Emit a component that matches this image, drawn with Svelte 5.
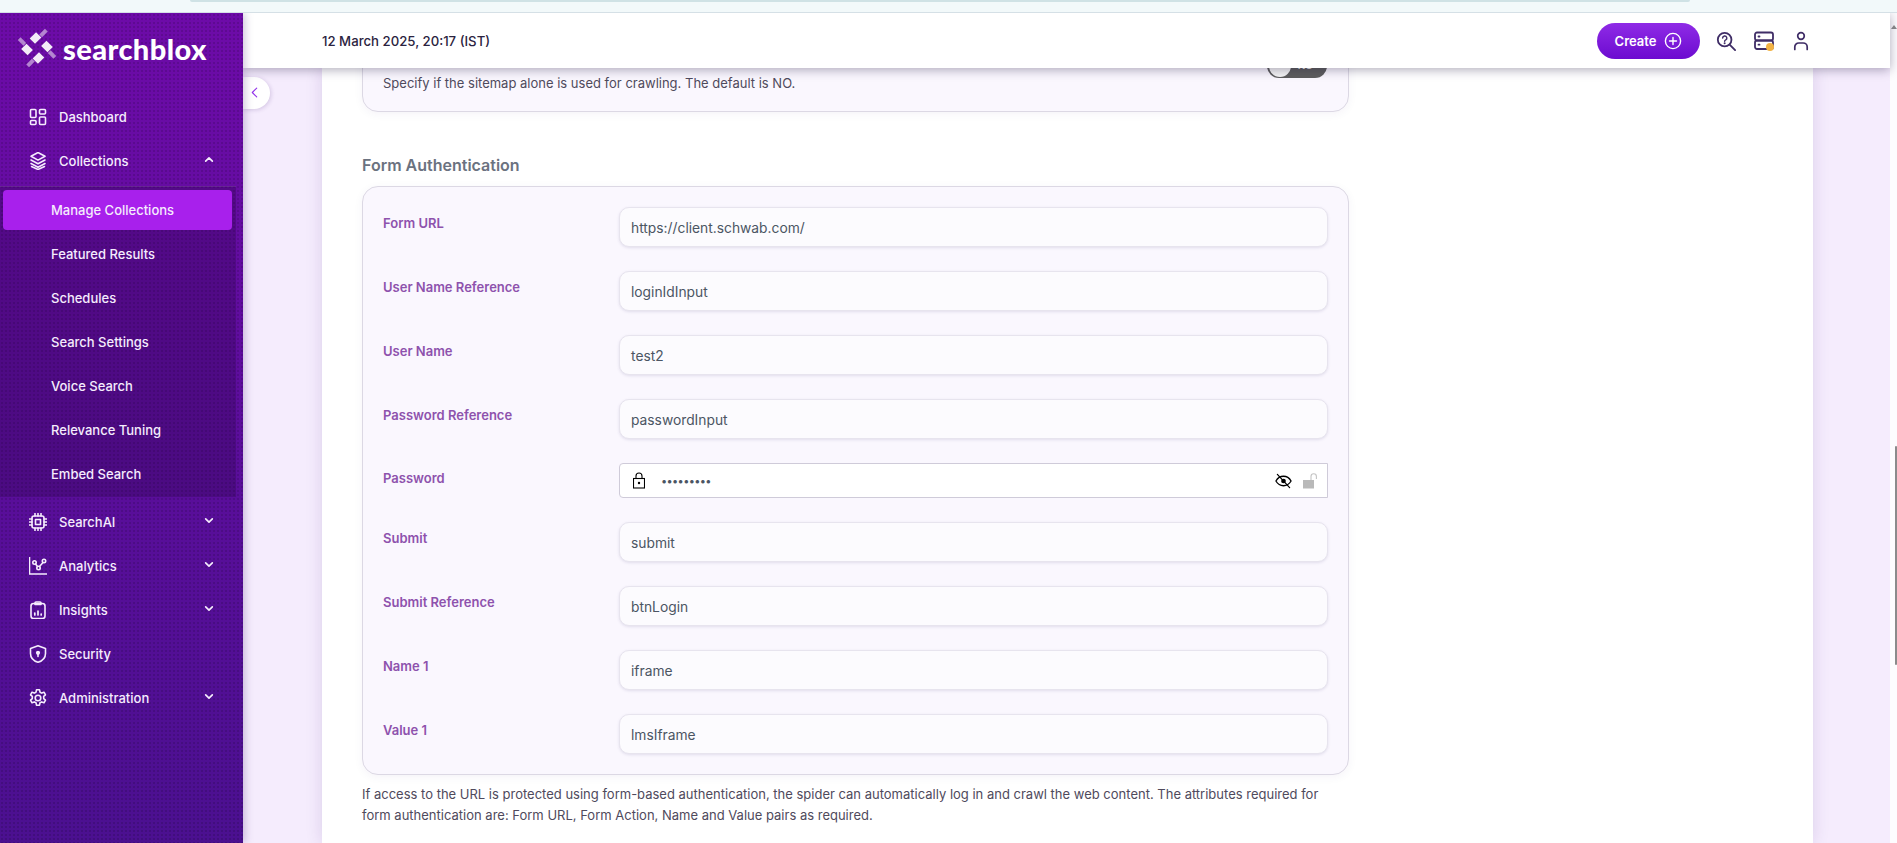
<script lang="ts">
	const fields = [
		{ label: 'Form URL', value: 'https://client.schwab.com/' },
		{ label: 'User Name Reference', value: 'loginIdInput' },
		{ label: 'User Name', value: 'test2' },
		{ label: 'Password Reference', value: 'passwordInput' },
		{ label: 'Password', value: '•••••••••', secret: true },
		{ label: 'Submit', value: 'submit' },
		{ label: 'Submit Reference', value: 'btnLogin' },
		{ label: 'Name 1', value: 'iframe' },
		{ label: 'Value 1', value: 'lmsIframe' }
	];

	const subItems = [
		'Manage Collections',
		'Featured Results',
		'Schedules',
		'Search Settings',
		'Voice Search',
		'Relevance Tuning',
		'Embed Search'
	];

	const lowerItems = [
		{ name: 'SearchAI', icon: 'chip', caret: true },
		{ name: 'Analytics', icon: 'chart', caret: true },
		{ name: 'Insights', icon: 'clip', caret: true },
		{ name: 'Security', icon: 'shield', caret: false },
		{ name: 'Administration', icon: 'gear', caret: true }
	];

	const logoTurns = [0, 90, 180, 270];
</script>

{#snippet caret(up: boolean)}
	<svg class="caret" viewBox="0 0 12 8" width="10" height="7" fill="none" stroke="currentColor" stroke-width="2" stroke-linecap="round" stroke-linejoin="round">
		<path d={up ? 'M2 6l4-4 4 4' : 'M2 2l4 4 4-4'} />
	</svg>
{/snippet}

{#snippet navIcon(name: string)}
	<svg class="nav-icon" viewBox="1 1 18 18" width="18" height="18" fill="none" stroke="currentColor" stroke-width="1.600" stroke-linecap="round" stroke-linejoin="round">
		{#if name === 'dash'}
			<rect x="2.500" y="2.500" width="5.500" height="8" rx="1" />
			<rect x="11.500" y="2.500" width="6" height="4.500" rx="1" />
			<rect x="2.500" y="13.500" width="5.500" height="4" rx="1" />
			<rect x="11.500" y="10" width="6" height="7.500" rx="1" />
		{:else if name === 'layers'}
			<path d="M10 1.500l7 3.800-7 3.800-7-3.800z" />
			<path d="M3 9l7 3.800L17 9" />
			<path d="M3 12.500l7 3.800 7-3.800" />
			<path d="M3.500 15.500l6.500 3 6.500-3" />
		{:else if name === 'chip'}
			<rect x="4" y="4" width="12" height="12" rx="2" />
			<rect x="7.500" y="7.500" width="5" height="5" />
			<path d="M7 1.500V4M10 1.500V4M13 1.500V4M7 16v2.500M10 16v2.500M13 16v2.500M1.500 7H4M1.500 10H4M1.500 13H4M16 7h2.500M16 10h2.500M16 13h2.500" />
		{:else if name === 'chart'}
			<path d="M1.500 1.500v16.500h17" stroke-linecap="square" />
			<circle cx="6.500" cy="6.500" r="1.700" />
			<circle cx="10.500" cy="12" r="1.700" />
			<circle cx="16" cy="5" r="1.700" />
			<path d="M7.500 8l2 2.500M11.500 10.500l3.500-4" />
		{:else if name === 'clip'}
			<rect x="3" y="3.500" width="14" height="15" rx="2.500" />
			<path d="M7 4.500V3a1 1 0 0 1 1-1h4a1 1 0 0 1 1 1v1.500z" />
			<path d="M6.800 15v-2M10 15v-4M13.200 15v-1" stroke-width="1.700" />
		{:else if name === 'shield'}
			<path d="M10 1.800l7.500 2.600v5c0 4.200-3 7.400-7.500 8.800-4.500-1.400-7.500-4.600-7.500-8.800v-5z" />
			<circle cx="10" cy="8.800" r="1.300" fill="currentColor" />
			<path d="M10 9.500v3" />
		{:else if name === 'gear'}
			<circle cx="10" cy="10" r="2.800" />
			<path d="M8.500 1.800h3l.5 2.400 1.700.9 2.300-.9 1.500 2.600-1.800 1.600v2.200l1.800 1.600-1.500 2.600-2.300-.9-1.700.9-.5 2.400h-3l-.5-2.400-1.700-.9-2.300.9-1.500-2.600 1.800-1.600V8.400L2.500 6.800 4 4.200l2.300.9 1.700-.9z" />
		{/if}
	</svg>
{/snippet}

<div class="browser-strip"><span class="tab"></span></div>

<div class="app">
	<aside class="sidebar">
		<div class="logo">
			<svg viewBox="-20 -20 40 40" width="40" height="40" fill="#fff">
				{#each logoTurns as turn}
					<g transform="rotate({turn})">
						<rect x="-6" y="-13.700" width="9" height="7.500" transform="rotate(-45 -1.500 -10)" opacity="0.92" />
						<rect x="2.500" y="-17" width="8" height="4" transform="rotate(-45 6.500 -15)" opacity="0.5" />
					</g>
				{/each}
			</svg>
			<span>searchblox</span>
		</div>

		<nav>
			<div class="nav-item">{@render navIcon('dash')}<span>Dashboard</span></div>
			<div class="nav-item">{@render navIcon('layers')}<span>Collections</span>{@render caret(true)}</div>
			<div class="submenu">
				{#each subItems as item, i}
					<div class="sub-item" class:active={i === 0}>{item}</div>
				{/each}
			</div>
			{#each lowerItems as item}
				<div class="nav-item">
					{@render navIcon(item.icon)}<span>{item.name}</span>
					{#if item.caret}{@render caret(false)}{/if}
				</div>
			{/each}
		</nav>
	</aside>

	<div class="main">
		<header class="topbar">
			<span class="date">12 March 2025, 20:17 (IST)</span>
			<div class="actions">
				<button class="create">
					Create
					<svg viewBox="0 0 18 18" width="18" height="18" fill="none" stroke="#fff" stroke-width="1.400" stroke-linecap="round">
						<circle cx="9" cy="9" r="7.600" />
						<path d="M9 5.500v7M5.500 9h7" />
					</svg>
				</button>
				<svg viewBox="0 0 22 22" width="20" height="20" fill="none" stroke="#3f2d66" stroke-width="2" stroke-linecap="round">
					<circle cx="9.500" cy="9.500" r="7.500" />
					<path d="M15 15l6 6" />
					<path d="M7.300 7.800a2.300 2.300 0 1 1 3.400 2c-.8.400-1.200.8-1.200 1.500" stroke-width="1.600" />
					<circle cx="9.500" cy="13.600" r="0.500" stroke-width="1.200" />
				</svg>
				<span class="server">
					<svg viewBox="0 0 20 20" width="20" height="20" fill="none" stroke="#3f2d66" stroke-width="1.800" stroke-linecap="round">
						<rect x="1" y="1.500" width="18" height="8" rx="2" />
						<rect x="1" y="9.500" width="18" height="8.500" rx="2" />
						<path d="M4.500 5.500h1M4.500 13.700h1" />
					</svg>
					<i class="dot"></i>
				</span>
				<svg class="user" viewBox="0 0 16 20" width="16" height="20" fill="none" stroke="#3f2d66" stroke-width="1.700" stroke-linecap="round">
					<circle cx="8" cy="5" r="3.300" />
					<path d="M1.800 18.500v-2.500a4 4 0 0 1 4-4h4.400a4 4 0 0 1 4 4v2.500" />
				</svg>
			</div>
		</header>

		<button class="collapse" aria-label="Collapse sidebar">
			<svg viewBox="0 0 8 12" width="7" height="11" fill="none" stroke="#9333ea" stroke-width="1.300" stroke-linecap="round" stroke-linejoin="round">
				<path d="M6.500 1L1.500 6l5 5" />
			</svg>
		</button>

		<div class="scroller">
			<div class="card">
				<div class="panel sitemap">
					<p class="hint">Specify if the sitemap alone is used for crawling. The default is NO.</p>
					<div class="toggle"><span class="knob"></span><span class="no">NO</span></div>
				</div>

				<h3>Form Authentication</h3>

				<div class="panel form">
					{#each fields as f}
						<div class="row">
							<span class="label" class:tight={f.secret}>{f.label}</span>
							{#if f.secret}
								<div class="input secret">
									<svg class="lock" viewBox="1 0 12 16" width="12" height="17" fill="none" stroke="#000" stroke-width="1.100">
										<rect x="1.500" y="6" width="11" height="9.500" />
										<path d="M4 6V3.500a3 3 0 0 1 6 0V6" />
										<circle cx="7" cy="10.500" r="1.200" fill="#000" stroke="none" />
									</svg>
									<span class="dots">{f.value}</span>
									<svg class="eye" viewBox="0 0 18 16" width="17" height="16" fill="none" stroke="#000" stroke-width="1.400" stroke-linecap="round">
										<path d="M1 8c2-3.500 4.800-5 8-5s6 1.500 8 5c-2 3.500-4.800 5-8 5s-6-1.500-8-5z" />
										<circle cx="9" cy="8" r="2.500" fill="#000" stroke="none" />
										<path d="M2.500 1l13 14" stroke-width="1.300" />
									</svg>
									<svg class="unlock" viewBox="0 0 16 16" width="16" height="16" fill="none">
										<rect x="1" y="7" width="11" height="8.500" fill="#b9b9b9" />
										<path d="M9 7V3.500a2.700 2.700 0 0 1 5.400 0V6" stroke="#c4c4c4" stroke-width="1.100" />
									</svg>
								</div>
							{:else}
								<div class="input">{f.value}</div>
							{/if}
						</div>
					{/each}
				</div>

				<p class="note">
					If access to the URL is protected using form-based authentication, the spider can automatically log in and crawl the web content. The attributes required for form authentication are: Form URL, Form Action, Name and Value pairs as required.
				</p>
			</div>
		</div>
	</div>

	<div class="page-scroll"><i class="arrow"></i><span></span></div>
</div>

<style>
	:global(body) {
		margin: 0;
		font-family: Inter, 'Noto Sans', sans-serif;
		overflow: hidden;
	}

	.browser-strip {
		height: 12px;
		background: #f2f9fa;
		border-bottom: 1px solid #d5e0e6;
		position: relative;
		overflow: hidden;
	}

	.tab {
		display: block;
		height: 2px;
		margin: 0 207px 0 190px;
		background: #cfe2e5;
		border-radius: 0 0 8px 8px;
	}

	.app {
		display: flex;
		height: 830px;
		overflow: hidden;
	}

	.sidebar {
		width: 243px;
		flex: none;
		color: #f5ecfd;
		background:
			radial-gradient(circle, rgba(0, 0, 0, 0.13) 1px, transparent 1.3px) 0 0 / 4px 4px,
			linear-gradient(180deg, #6d0ba8 0%, #4b1090 100%);
		box-shadow: 2px 0 8px rgba(60, 20, 110, 0.25);
		position: relative;
		z-index: 3;
	}

	.logo {
		display: flex;
		align-items: center;
		gap: 6px;
		padding: 10px 0 0 17px;
		height: 50px;
	}

	.logo span {
		font-family: Lato, sans-serif;
		font-weight: 900;
		font-size: 29px;
		color: #fff;
		letter-spacing: 0.4px;
	}

	nav {
		margin-top: 22px;
	}

	.nav-item {
		display: flex;
		align-items: center;
		height: 44px;
		padding: 0 29px;
		font-size: 13px;
		font-weight: 500;
	}

	.nav-icon {
		flex: none;
		margin-right: 12px;
	}

	.nav-item span {
		flex: 1;
	}

	.caret {
		flex: none;
		margin-bottom: 3px;
	}

	.submenu {
		width: 236px;
		margin-top: 3px;
		padding: 3px 0 0;
		height: 311px;
		box-sizing: border-box;
		background: rgba(40, 5, 70, 0.28);
		border-top: 1px solid rgba(255, 255, 255, 0.12);
		margin-bottom: 3px;
	}

	.sub-item {
		display: flex;
		align-items: center;
		height: 40px;
		margin: 0 4px 4px 3px;
		padding-left: 48px;
		font-size: 13px;
		font-weight: 500;
		border-radius: 4px;
	}

	.sub-item.active {
		background: #a820ec;
	}

	.main {
		flex: 1;
		min-width: 0;
		display: flex;
		flex-direction: column;
		position: relative;
	}

	.topbar {
		height: 55px;
		flex: none;
		background: #fff;
		display: flex;
		align-items: center;
		justify-content: space-between;
		padding: 0 81px 0 79px;
		box-shadow: 0 2px 10px rgba(30, 20, 60, 0.35);
		position: relative;
		z-index: 2;
	}

	.date {
		font-size: 13.200px;
		font-weight: 500;
		color: #2b2340;
	}

	.actions {
		display: flex;
		align-items: center;
		gap: 18px;
	}

	.create {
		display: flex;
		align-items: center;
		gap: 8px;
		height: 36px;
		width: 103px;
		justify-content: center;
		margin-right: -2px;
		border: none;
		border-radius: 18px;
		background: linear-gradient(180deg, #8f2be6, #6c0bd0);
		color: #fff;
		font: 600 13px Inter, sans-serif;
	}

	.server {
		position: relative;
		display: block;
		width: 20px;
		height: 20px;
	}

	.dot {
		position: absolute;
		right: 0;
		bottom: 0;
		width: 8px;
		height: 8px;
		border-radius: 50%;
		background: #f2b243;
	}

	.user {
		margin-left: 1px;
	}

	.collapse {
		position: absolute;
		left: 0;
		top: 64px;
		width: 27px;
		height: 32px;
		border: none;
		padding: 0 0 0 8px;
		text-align: left;
		background: #fff;
		border-radius: 0 16px 16px 0;
		box-shadow: 1px 1px 4px rgba(60, 20, 110, 0.18);
		z-index: 1;
	}

	.scroller {
		flex: 1;
		min-height: 0;
		overflow: hidden;
		background: #f5ecfd;
		padding: 0 77px 0 79px;
	}

	.card {
		display: flow-root;
		background: #fff;
		padding: 0 40px;
		height: 100%;
		box-sizing: border-box;
		box-shadow: 0 0 16px rgba(60, 20, 110, 0.14);
	}

	.panel {
		width: 987px;
		box-sizing: border-box;
		background: #faf7fe;
		border: 1px solid #dcd8e4;
		border-radius: 16px;
		box-shadow: 0 2px 10px rgba(60, 20, 110, 0.05);
	}

	.sitemap {
		margin-top: -30px;
		height: 74px;
		padding: 36px 21px 0 20px;
		display: flex;
		justify-content: space-between;
		align-items: flex-start;
	}

	.hint {
		margin: 0;
		font-size: 13px;
		color: #4f4a5c;
	}

	.toggle {
		width: 60px;
		height: 24px;
		margin-top: -21px;
		border-radius: 12px;
		background: #5d5d5d;
		position: relative;
	}

	.knob {
		position: absolute;
		left: 2px;
		top: 1px;
		width: 22px;
		height: 22px;
		border-radius: 50%;
		background: #f5f5f5;
	}

	.no {
		position: absolute;
		right: 14px;
		top: 5px;
		font-size: 10px;
		font-weight: 700;
		color: #e8e8e8;
	}

	h3 {
		margin: 43px 0 0;
		height: 31px;
		font-size: 16px;
		font-weight: 600;
		color: #6b7280;
		line-height: 20px;
	}

	.form {
		height: 589px;
		padding: 20px 20px 0 20px;
	}

	.row {
		display: grid;
		grid-template-columns: 236px 1fr;
		margin-bottom: 24px;
	}

	.label {
		font-size: 13px;
		font-weight: 600;
		color: #8e52ad;
		padding-top: 8px;
	}

	.label.tight {
		padding-top: 7px;
	}

	.input {
		height: 40px;
		box-sizing: border-box;
		padding: 1px 11px 0;
		display: flex;
		align-items: center;
		font-size: 13.800px;
		color: #4b5563;
		background: #fcfbfe;
		border: 1px solid #e7e4ee;
		border-radius: 10px;
		box-shadow: 0 1px 3px rgba(80, 70, 130, 0.14);
	}

	.input.secret {
		height: 35px;
		background: #fff;
		border: 1px solid #cfcbd9;
		border-radius: 4px 0 0 4px;
		box-shadow: none;
		padding: 0 9px 0 13px;
	}

	.lock {
		margin-right: 16px;
	}

	.dots {
		flex: 1;
		font-size: 11px;
		letter-spacing: -0.65px;
	}

	.eye {
		margin-right: 10px;
	}

	.note {
		margin: 9px 0 0;
		width: 987px;
		font-size: 13px;
		line-height: 21px;
		color: #4f4a5c;
	}

	.page-scroll {
		width: 7px;
		flex: none;
		background: #fdfcfe;
		position: relative;
	}

	.arrow {
		position: absolute;
		right: 0;
		top: 12px;
		border: 3px solid transparent;
		border-top: 0;
		border-bottom: 4px solid #8b8b8b;
	}

	.page-scroll span {
		position: absolute;
		right: 0;
		top: 433px;
		width: 2px;
		height: 219px;
		background: #8b8b8b;
		border-radius: 1px;
	}
</style>
